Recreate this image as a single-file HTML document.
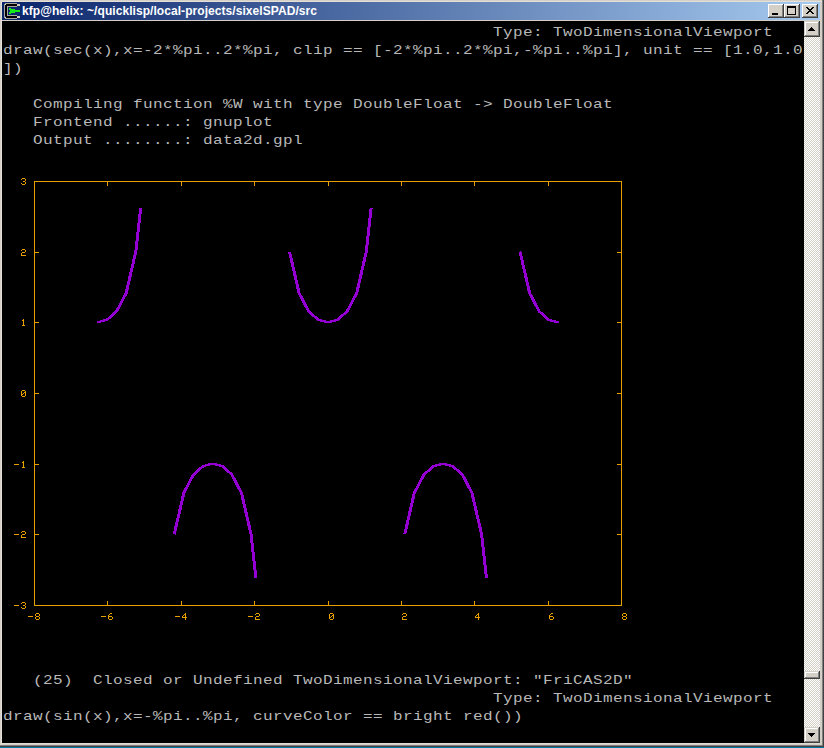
<!DOCTYPE html>
<html><head><meta charset="utf-8"><style>
html,body{margin:0;padding:0;width:824px;height:748px;overflow:hidden;background:#0078a8;}
#win{position:absolute;left:0;top:0;width:824px;height:747px;background:#d4d0c8;}
.abs{position:absolute;}
#title{position:absolute;left:2px;top:2px;width:818px;height:18px;background:linear-gradient(to right,#0a246a,#a6caf0);}
#title .t{position:absolute;left:20px;top:2px;font:bold 12px "Liberation Sans",sans-serif;color:#fff;white-space:pre;letter-spacing:0.06px;}
.icon{position:absolute;left:2px;top:1px;}
.btn{position:absolute;top:2px;width:16px;height:14px;background:#d4d0c8;box-sizing:border-box;
 box-shadow:inset -1px -1px #404040, inset 1px 1px #ffffff, inset -2px -2px #808080, inset 2px 2px #d4d0c8;}
#term{position:absolute;left:2px;top:21px;width:802px;height:722px;background:#000;overflow:hidden;}
.ln{position:absolute;left:1px;height:18px;line-height:18px;font-family:"Liberation Mono",monospace;font-size:16px;letter-spacing:0.4px;transform:scaleY(0.85);transform-origin:0 0;color:#b8b8b8;white-space:pre;}
.plot{position:absolute;left:0;top:0;}
#sb{position:absolute;left:804px;top:21px;width:16px;height:722px;
 background-image:repeating-conic-gradient(#ffffff 0 25%,#d4d0c8 0 50%);background-size:2px 2px;}
.sbtn{position:absolute;left:0;width:16px;height:16px;background:#d4d0c8;
 box-shadow:inset -1px -1px #404040, inset 1px 1px #d4d0c8, inset -2px -2px #808080, inset 2px 2px #ffffff;}
</style></head><body>
<div id="win">
 <div class="abs" style="left:0;top:0;width:824px;height:1px;background:#d4d0c8"></div>
 <div class="abs" style="left:1px;top:1px;width:821px;height:1px;background:#e4e0d8"></div>
 <div class="abs" style="left:1px;top:1px;width:1px;height:744px;background:#e4e0d8"></div><div class="abs" style="left:2px;top:743px;width:818px;height:1px;background:#e0dcd4"></div>
 <div class="abs" style="left:822px;top:0;width:1px;height:746px;background:#808080"></div>
 <div class="abs" style="left:823px;top:0;width:1px;height:747px;background:#404040"></div>
 <div class="abs" style="left:0;top:745px;width:823px;height:1px;background:#808080"></div>
 <div class="abs" style="left:0;top:746px;width:824px;height:1px;background:#404040"></div>
 <div id="title"><svg class="icon" width="16" height="16" viewBox="0 0 16 16" shape-rendering="crispEdges">
<path fill="#a8a49c" d="M1 0h12v1h-12zM0 1h1v14h-1zM1 15h12v1h-12zM4 3h9v1h-9zM3 3h1v10h-1zM4 12h9v1h-9z"/>
<path fill="#d0ccc4" d="M13 1h3v2h-3zM13 13h3v2h-3zM1 1h1v1h-1zM1 14h1v1h-1z"/>
<path fill="#000" d="M2 1h11v2h-11zM1 2h2v11h-2zM2 13h11v2h-11z"/>
<path fill="#18e818" d="M5 5h2v1h-2zM5 6h6v1h-6zM6 7h10v2h-10zM5 9h6v1h-6zM5 10h2v1h-2z"/>
</svg><div class="t">kfp@helix: ~/quicklisp/local-projects/sixelSPAD/src</div>
  <div class="btn" style="left:766px"><div class="abs" style="left:4px;top:9px;width:6px;height:2px;background:#000"></div></div>
  <div class="btn" style="left:782px"><div class="abs" style="left:3px;top:2px;width:9px;height:9px;box-sizing:border-box;border:1px solid #000;border-top-width:2px"></div></div>
  <div class="btn" style="left:800px"><svg class="abs" style="left:4px;top:3px" width="8" height="7" viewBox="0 0 8 7"><path d="M0 0h2v1h-2zM6 0h2v1h-2zM1 1h2v1h-2zM5 1h2v1h-2zM2 2h4v1h-4zM3 3h2v1h-2zM2 4h4v1h-4zM1 5h2v1h-2zM5 5h2v1h-2zM0 6h2v1h-2zM6 6h2v1h-2z" fill="#000" shape-rendering="crispEdges"/></svg></div>
 </div>
 <div id="term"><svg class="plot" style="left:-2px;top:-21px" width="824" height="748" viewBox="0 0 824 748"><path fill="#e8a000" shape-rendering="crispEdges" d="M34 181h588v1h-588zM34 605h588v1h-588zM34 181h1v425h-1zM621 181h1v425h-1zM28 616h5v1h-5zM36 613h3v1h-3zM35 614h1v1h-1zM39 614h1v1h-1zM35 615h1v1h-1zM39 615h1v1h-1zM36 616h3v1h-3zM35 617h1v1h-1zM39 617h1v1h-1zM35 618h1v1h-1zM39 618h1v1h-1zM36 619h3v1h-3zM107 601h1v4h-1zM107 182h1v4h-1zM101 616h5v1h-5zM110 613h2v1h-2zM109 614h1v1h-1zM108 615h1v1h-1zM108 616h4v1h-4zM108 617h1v1h-1zM112 617h1v1h-1zM108 618h1v1h-1zM112 618h1v1h-1zM109 619h3v1h-3zM181 601h1v4h-1zM181 182h1v4h-1zM175 616h5v1h-5zM185 613h1v1h-1zM184 614h2v1h-2zM183 615h1v1h-1zM185 615h1v1h-1zM182 616h1v1h-1zM185 616h1v1h-1zM182 617h5v1h-5zM185 618h1v1h-1zM185 619h1v1h-1zM254 601h1v4h-1zM254 182h1v4h-1zM248 616h5v1h-5zM256 613h3v1h-3zM255 614h1v1h-1zM259 614h1v1h-1zM259 615h1v1h-1zM256 616h3v1h-3zM255 617h1v1h-1zM255 618h1v1h-1zM255 619h5v1h-5zM328 601h1v4h-1zM328 182h1v4h-1zM330 613h3v1h-3zM329 614h1v1h-1zM333 614h1v1h-1zM329 615h1v1h-1zM332 615h2v1h-2zM329 616h1v1h-1zM331 616h1v1h-1zM333 616h1v1h-1zM329 617h2v1h-2zM333 617h1v1h-1zM329 618h1v1h-1zM333 618h1v1h-1zM330 619h3v1h-3zM401 601h1v4h-1zM401 182h1v4h-1zM403 613h3v1h-3zM402 614h1v1h-1zM406 614h1v1h-1zM406 615h1v1h-1zM403 616h3v1h-3zM402 617h1v1h-1zM402 618h1v1h-1zM402 619h5v1h-5zM474 601h1v4h-1zM474 182h1v4h-1zM478 613h1v1h-1zM477 614h2v1h-2zM476 615h1v1h-1zM478 615h1v1h-1zM475 616h1v1h-1zM478 616h1v1h-1zM475 617h5v1h-5zM478 618h1v1h-1zM478 619h1v1h-1zM548 601h1v4h-1zM548 182h1v4h-1zM551 613h2v1h-2zM550 614h1v1h-1zM549 615h1v1h-1zM549 616h4v1h-4zM549 617h1v1h-1zM553 617h1v1h-1zM549 618h1v1h-1zM553 618h1v1h-1zM550 619h3v1h-3zM623 613h3v1h-3zM622 614h1v1h-1zM626 614h1v1h-1zM622 615h1v1h-1zM626 615h1v1h-1zM623 616h3v1h-3zM622 617h1v1h-1zM626 617h1v1h-1zM622 618h1v1h-1zM626 618h1v1h-1zM623 619h3v1h-3zM14 605h5v1h-5zM22 602h3v1h-3zM21 603h1v1h-1zM25 603h1v1h-1zM25 604h1v1h-1zM23 605h2v1h-2zM25 606h1v1h-1zM21 607h1v1h-1zM25 607h1v1h-1zM22 608h3v1h-3zM35 534h4v1h-4zM617 534h4v1h-4zM14 534h5v1h-5zM22 531h3v1h-3zM21 532h1v1h-1zM25 532h1v1h-1zM25 533h1v1h-1zM22 534h3v1h-3zM21 535h1v1h-1zM21 536h1v1h-1zM21 537h5v1h-5zM35 464h4v1h-4zM617 464h4v1h-4zM14 464h5v1h-5zM23 461h1v1h-1zM22 462h2v1h-2zM23 463h1v1h-1zM23 464h1v1h-1zM23 465h1v1h-1zM23 466h1v1h-1zM22 467h3v1h-3zM35 393h4v1h-4zM617 393h4v1h-4zM22 390h3v1h-3zM21 391h1v1h-1zM25 391h1v1h-1zM21 392h1v1h-1zM24 392h2v1h-2zM21 393h1v1h-1zM23 393h1v1h-1zM25 393h1v1h-1zM21 394h2v1h-2zM25 394h1v1h-1zM21 395h1v1h-1zM25 395h1v1h-1zM22 396h3v1h-3zM35 322h4v1h-4zM617 322h4v1h-4zM23 319h1v1h-1zM22 320h2v1h-2zM23 321h1v1h-1zM23 322h1v1h-1zM23 323h1v1h-1zM23 324h1v1h-1zM22 325h3v1h-3zM35 252h4v1h-4zM617 252h4v1h-4zM22 249h3v1h-3zM21 250h1v1h-1zM25 250h1v1h-1zM25 251h1v1h-1zM22 252h3v1h-3zM21 253h1v1h-1zM21 254h1v1h-1zM21 255h5v1h-5zM22 178h3v1h-3zM21 179h1v1h-1zM25 179h1v1h-1zM25 180h1v1h-1zM23 181h2v1h-2zM25 182h1v1h-1zM21 183h1v1h-1zM25 183h1v1h-1zM22 184h3v1h-3z"/><g fill="none" stroke="#9400d3" stroke-width="2.2" stroke-linejoin="round" shape-rendering="crispEdges"><polyline points="96.99,322.33 106.59,319.84 116.20,311.40 125.80,293.06 135.40,251.67 140.21,208.34"/><polyline points="289.08,251.67 298.69,293.06 308.29,311.40 317.90,319.84 327.50,322.33 337.10,319.84 346.71,311.40 356.31,293.06 365.92,251.67 370.72,208.34"/><polyline points="519.60,251.67 529.20,293.06 538.80,311.40 548.41,319.84 558.01,322.33"/><polyline points="173.82,534.33 183.43,492.94 193.03,474.60 202.64,466.16 212.24,463.67 221.85,466.16 231.45,474.60 241.06,492.94 250.66,534.33 255.46,577.66"/><polyline points="404.34,534.33 413.94,492.94 423.55,474.60 433.15,466.16 442.76,463.67 452.36,466.16 461.97,474.60 471.57,492.94 481.18,534.33 485.98,577.66"/><g transform="translate(0.8,0)"><polyline points="96.99,322.33 106.59,319.84 116.20,311.40 125.80,293.06 135.40,251.67 140.21,208.34"/><polyline points="289.08,251.67 298.69,293.06 308.29,311.40 317.90,319.84 327.50,322.33 337.10,319.84 346.71,311.40 356.31,293.06 365.92,251.67 370.72,208.34"/><polyline points="519.60,251.67 529.20,293.06 538.80,311.40 548.41,319.84 558.01,322.33"/><polyline points="173.82,534.33 183.43,492.94 193.03,474.60 202.64,466.16 212.24,463.67 221.85,466.16 231.45,474.60 241.06,492.94 250.66,534.33 255.46,577.66"/><polyline points="404.34,534.33 413.94,492.94 423.55,474.60 433.15,466.16 442.76,463.67 452.36,466.16 461.97,474.60 471.57,492.94 481.18,534.33 485.98,577.66"/></g></g></svg><div class="ln" style="top:4px">                                                 Type: TwoDimensionalViewport</div><div class="ln" style="top:22px">draw(sec(x),x=-2*%pi..2*%pi, clip == [-2*%pi..2*%pi,-%pi..%pi], unit == [1.0,1.0</div><div class="ln" style="top:40px">])</div><div class="ln" style="top:76px">   Compiling function %W with type DoubleFloat -&gt; DoubleFloat</div><div class="ln" style="top:94px">   Frontend ......: gnuplot</div><div class="ln" style="top:112px">   Output ........: data2d.gpl</div><div class="ln" style="top:652px">   (25)  Closed or Undefined TwoDimensionalViewport: &quot;FriCAS2D&quot;</div><div class="ln" style="top:670px">                                                 Type: TwoDimensionalViewport</div><div class="ln" style="top:688px">draw(sin(x),x=-%pi..%pi, curveColor == bright red())</div></div>
 <div id="sb">
  <div class="sbtn" style="top:0"><svg class="abs" style="left:4px;top:6px" width="7" height="4"><path d="M3 0h1v1h1v1h1v1h1v1h-7v-1h1v-1h1v-1h1z" fill="#000" shape-rendering="crispEdges"/></svg></div>
  <div class="sbtn" style="top:650px;height:8px"></div>
  <div class="sbtn" style="top:706px"><svg class="abs" style="left:4px;top:6px" width="7" height="4"><path d="M0 0h7v1h-1v1h-1v1h-1v1h-1v-1h-1v-1h-1v-1h-1z" fill="#000" shape-rendering="crispEdges"/></svg></div>
 </div>
</div>
</body></html>
